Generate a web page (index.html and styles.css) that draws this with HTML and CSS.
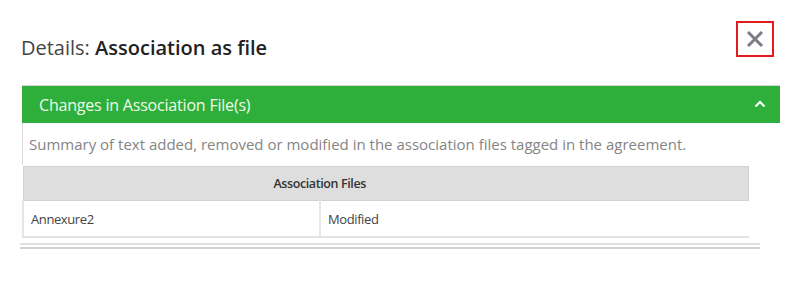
FILE: index.html
```html
<!DOCTYPE html>
<html lang="en">
<head>
  <meta charset="UTF-8" />
  <meta name="viewport" content="width=device-width" />
  <title>Details</title>
  <link rel="stylesheet" href="styles.css">
</head>
<body>
  <div class="modal">
    <div class="modal-head">
      <h2><span class="label">Details:</span> Association as file</h2>
      <button class="close" title="Close">
        <svg width="18" height="18" viewBox="0 0 18 18">
          <path d="M2 2 L16 16 M16 2 L2 16" stroke="#7a7d82" stroke-width="3" fill="none" />
        </svg>
      </button>
    </div>
    <div class="panel">
      <div class="panel-head">
        <span>Changes in Association File(s)</span>
        <svg class="chevron" width="12" height="8" viewBox="0 0 12 8">
          <path d="M1.5 6.5 L6 2 L10.5 6.5" stroke="#fff" stroke-width="2" fill="none" />
        </svg>
      </div>
      <div class="panel-body">
        <p class="summary">Summary of text added, removed or modified in the association files tagged in the agreement.</p>
      </div>
      <table class="files">
        <thead>
          <tr>
            <th colspan="2">Association Files</th>
          </tr>
        </thead>
        <tbody>
          <tr>
            <td class="name">Annexure2</td>
            <td>Modified</td>
          </tr>
        </tbody>
      </table>
      <div class="panel-foot"></div>
    </div>
  </div>
</body>
</html>
```

FILE: styles.css
```css
body {
  margin: 0;
  background: #fff;
  font-family: "Open Sans", sans-serif;
}
.modal {
  width: 800px;
  height: 300px;
  padding: 21px 26px 0 21px;
  box-sizing: border-box;
}
.modal-head {
  display: flex;
  justify-content: space-between;
  align-items: flex-start;
  height: 64px;
}
.modal-head h2 {
  margin: 13px 0 0 0;
  font-size: 20px;
  font-weight: 600;
  color: #222;
}
.modal-head .label {
  font-weight: 400;
  color: #444;
}
.close {
  width: 38px;
  height: 36px;
  border: 2px solid #e41b1b;
  background: #fff;
  padding: 0;
  display: flex;
  align-items: center;
  justify-content: center;
  cursor: pointer;
}
.panel {
  margin-left: 1px;
  width: 758px;
  border-top: 1px solid #d6d6d6;
}
.panel-head {
  display: flex;
  justify-content: space-between;
  align-items: center;
  height: 37px;
  padding: 0 14px 0 17px;
  background: #2eae3a;
  color: #eefbe9;
  font-size: 16px;
  letter-spacing: -0.2px;
}
.chevron {
  margin-top: -2px;
}
.panel-body {
  border-left: 1px solid #dcdcdc;
  height: 42px;
  display: flex;
  align-items: center;
}
.summary {
  margin: 0 0 0 6px;
  font-size: 15px;
  color: #858585;
}
.files {
  width: 727px;
  border-collapse: collapse;
  font-size: 13px;
  letter-spacing: -0.4px;
  margin-top: 1px;
}
.files th {
  height: 33px;
  background: #dedede;
  color: #333;
  font-size: 12.5px;
  font-weight: 600;
  text-align: left;
  padding: 0 0 0 250px;
  border: 1px solid #d2d2d2;
}
.files td {
  height: 35px;
  padding: 0 7px;
  color: #444;
  border-bottom: 2px solid #e2e2e2;
}
.files td.name {
  width: 281px;
  border-left: 2px solid #e6e6e6;
  border-right: 2px solid #e6e6e6;
}
.panel-foot {
  width: 740px;
  margin-top: 5px;
  margin-left: -2px;
  border-top: 2px solid #e0e0e0;
  border-bottom: 2px solid #d2d2d2;
  height: 2px;
}
```
